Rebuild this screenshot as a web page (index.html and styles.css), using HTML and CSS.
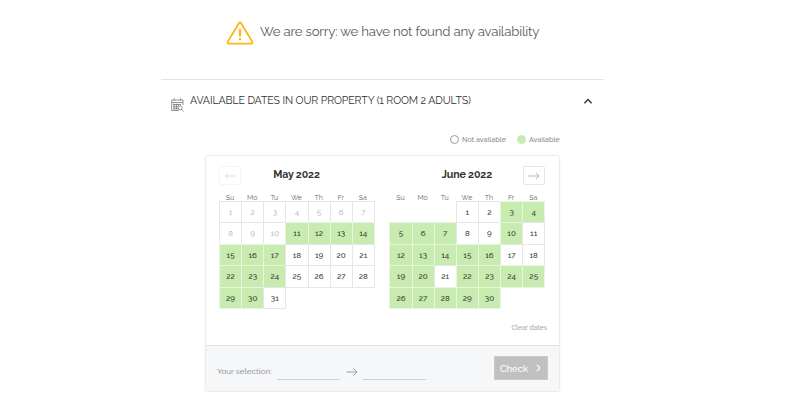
FILE: index.html
```html
<!DOCTYPE html>
<html lang="en">
<head>
<meta charset="utf-8">
<title>Availability</title>
<link rel="stylesheet" href="styles.css">
</head>
<body>
<main class="page">
  <div class="notice">
    <svg class="warn" viewBox="0 0 28 24" width="28" height="24" fill="none" stroke="#ffb31a" stroke-width="1.8" stroke-linecap="round" stroke-linejoin="round"><path d="M12.9 2.2Q14 .6 15.1 2.2L26.2 20.6Q27 22.6 25.2 22.6H2.8Q1 22.6 1.8 20.6Z"/><path d="M14 8.6v6M14 18v.5" stroke-width="2.2"/></svg>
    <span class="notice-text">We are sorry: we have not found any availability</span>
  </div>
  <section class="panel">
    <header class="panel-head">
      <svg class="cal-icon" viewBox="0 0 13 14" width="13" height="14" fill="none" stroke="#777" stroke-width=".8"><path d="M12 7V2H.7v10.5H8M.7 4.5H12M3.3.4v2.3M9.5.4v2.3M2.2 6.5H10M2.2 8.7H7M2.2 10.8H7M3 5.8v5.8M5.4 5.8v5.8M7.5 5.8V8"/><circle cx="9.2" cy="9.8" r="2"/><path d="M10.6 11.3l2 2.2"/></svg>
      <h2 class="panel-title">AVAILABLE DATES IN OUR PROPERTY (1 ROOM 2 ADULTS)</h2>
      <svg class="chevron" viewBox="0 0 10 6" width="10" height="6" fill="none" stroke="#333" stroke-width="1.4"><path d="M1.4 5.2L5 1.6l3.6 3.6"/></svg>
    </header>
    <div class="legend">
      <span class="dot"></span><span class="legend-no">Not available</span>
      <span class="dot dot-on"></span><span class="legend-yes">Available</span>
    </div>
    <div class="picker">
      <div class="months">
        <div class="month">
          <div class="month-head">
            <span class="nav nav-off"><svg viewBox="0 0 12 8" width="12" height="8"><path d="M11.5 4H1M4 1L1 4l3 3"/></svg></span>
            <h3 class="month-name">May 2022</h3>
          </div>
          <div class="week"><span>Su</span><span>Mo</span><span>Tu</span><span>We</span><span>Th</span><span>Fr</span><span>Sa</span></div>
          <div class="days" data-start="0" data-count="31" data-past="10" data-free="11,12,13,14,15,16,17,22,23,24,29,30"></div>
        </div>
        <div class="month">
          <div class="month-head">
            <h3 class="month-name">June 2022</h3>
            <span class="nav nav-next"><svg viewBox="0 0 12 8" width="12" height="8"><path d="M.5 4H11M8 1l3 3-3 3"/></svg></span>
          </div>
          <div class="week"><span>Su</span><span>Mo</span><span>Tu</span><span>We</span><span>Th</span><span>Fr</span><span>Sa</span></div>
          <div class="days" data-start="3" data-count="30" data-past="0" data-free="3,4,5,6,7,10,12,13,14,15,16,19,20,22,23,24,25,26,27,28,29,30"></div>
        </div>
      </div>
      <div class="clear"><span>Clear dates</span></div>
      <footer class="picker-foot">
        <span class="sel-label">Your selection:</span>
        <span class="field"></span>
        <svg class="sel-arrow" viewBox="0 0 12 8" width="12" height="8"><path d="M.5 4H11M7.5.5L11 4 7.5 7.5"/></svg>
        <span class="field"></span>
        <button class="check"><span>Check</span><svg viewBox="0 0 5 8" width="5" height="8" fill="none" stroke="#fff" stroke-width="1.2"><path d="M.8.8L4 4 .8 7.2"/></svg></button>
      </footer>
    </div>
  </section>
</main>
<script src="calendar.js"></script>
</body>
</html>
```
FILE: styles.css
```css
* { box-sizing: border-box; }
body { margin: 0; background: #fff; color: #333; font-family: Raleway, Lato, sans-serif; font-variant-numeric: oldstyle-nums; }
h2, h3 { margin: 0; font-weight: 400; }
.page { width: 443px; margin-left: 161px; }
.notice { display: flex; height: 79px; padding: 21px 0 0 65px; }
.warn { flex: none; }
.notice-text { margin-left: 6px; font-size: 13.2px; line-height: 22px; color: #5c5c5c; white-space: nowrap; letter-spacing: -.18px; }
.panel { border-top: 1px solid #e4e4e4; }
.panel-head { display: flex; height: 50px; padding: 11px 0 0 10px; }
.cal-icon { margin-top: 7px; }
.panel-title { margin-left: 6px; font-size: 10.6px; line-height: 19px; letter-spacing: -.12px; white-space: nowrap; color: #333; }
.chevron { margin: 7px 11px 0 auto; }
.legend { display: flex; align-items: center; height: 18px; margin-left: 289px; font-size: 7.15px; font-weight: 500; color: #888; white-space: nowrap; }
.dot { width: 9px; height: 9px; border: 1px solid #999; border-radius: 50%; margin-right: 3px; }
.legend-no { width: 55px; }
.dot-on { background: #c8ecb0; border-color: #c8ecb0; }
.picker { width: 355px; height: 237px; margin: 7px 0 0 44px; border: 1px solid #ececec; border-radius: 3px; box-shadow: 0 1px 3px rgba(0,0,0,.06); }
.months { display: flex; gap: 15.4px; padding: 10px 0 0 13px; height: 163px; }
.month { width: 155px; }
.month-head { display: flex; position: relative; justify-content: center; height: 26px; }
.month-name { font-size: 10.6px; line-height: 17px; letter-spacing: -.13px; font-weight: 700; color: #333; }
.nav { position: absolute; left: 0; top: 0; width: 22px; height: 19px; border: 1px solid #e4e7e7; border-radius: 2px; display: flex; align-items: center; justify-content: center; }
.nav-next { left: auto; right: -1px; }
.nav-off { opacity: .4; }
.nav svg, .sel-arrow { fill: none; stroke: #a0a5a5; stroke-width: .8; }
.sel-arrow { stroke: #888; }
.week { display: grid; grid-template-columns: repeat(7, 22.14px); height: 9px; font-size: 7px; line-height: 11px; text-align: center; color: #666; }
.days { display: grid; grid-template-columns: repeat(7, 22.14px); grid-template-rows: 20.5px 22px repeat(3, 21.5px); font-size: 8px; font-weight: 500; text-align: center; }
.day { display: flex; align-items: center; justify-content: center; margin: 0 -1px -1px 0; border: 1px solid #e4e7e7; color: #383838; }
.past { color: #bcc0c0; }
.free { background: #c8ecb0; border-color: #e8f5e0; }
.clear { display: flex; justify-content: flex-end; height: 26px; padding-right: 12px; font-size: 6.7px; font-weight: 500; line-height: 18px; color: #a5a5a5; }
.picker-foot { display: flex; height: 46px; padding: 10px 11px 0; border-top: 1px solid #dfe1e2; background: #f5f7f9; }
.sel-label { width: 59.5px; font-size: 8px; font-weight: 500; line-height: 30px; color: #999; white-space: nowrap; }
.field { width: 63px; height: 24px; border-bottom: 1px solid #cfd2d3; }
.sel-arrow { margin: 12px 5px 0 6px; }
.check { display: flex; align-items: center; gap: 8px; width: 54px; height: 24px; margin-left: auto; padding: 0 0 0 5px; border: 1px solid #cacaca; background: #c0c0c0; color: #fff; font: 500 9.5px Raleway, Lato, sans-serif; }
```
FILE: calendar.js
```js
document.querySelectorAll('.days').forEach(function (grid) {
  var free = grid.dataset.free.split(',').map(Number);
  var start = Number(grid.dataset.start);
  for (var d = 1; d <= Number(grid.dataset.count); d++) {
    var cell = document.createElement('span');
    cell.className = 'day' + (free.includes(d) ? ' free' : '') + (d <= Number(grid.dataset.past) ? ' past' : '');
    if (d === 1) cell.style.gridColumnStart = start + 1;
    cell.textContent = d;
    grid.appendChild(cell);
  }
});
```
